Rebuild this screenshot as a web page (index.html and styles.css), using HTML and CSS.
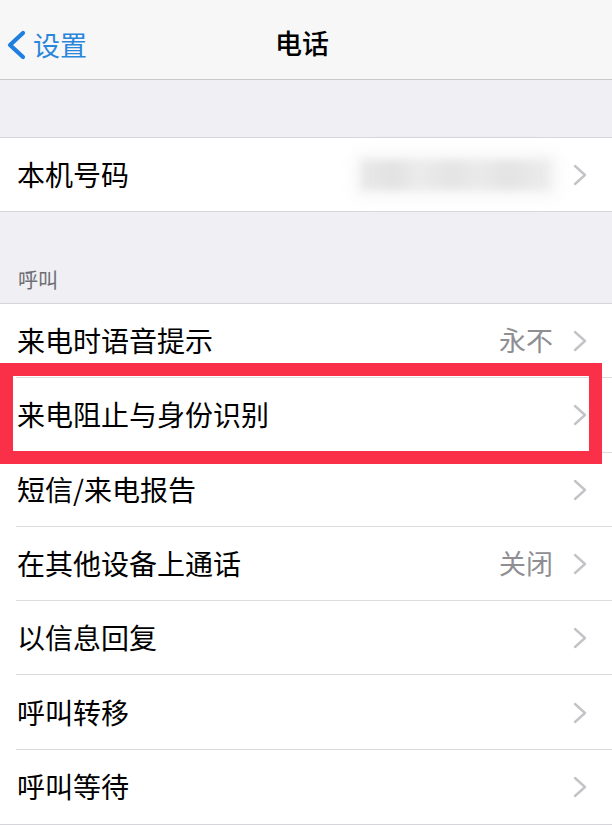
FILE: index.html
```html
<!DOCTYPE html>
<html lang="zh-CN">
<head>
<meta charset="utf-8">
<title>电话</title>
<link rel="stylesheet" href="styles.css">
</head>
<body>
<div class="nav">
  <div class="back">
    <svg class="back-icon" width="24" height="30" viewBox="0 0 24 30"><path d="M19 3 L6 15 L19 27" fill="none" stroke="#1f7fe0" stroke-width="4.2" stroke-linecap="round" stroke-linejoin="round"/></svg>
    <span class="back-text">设置</span>
  </div>
  <div class="title">电话</div>
</div>

<div class="gap-top"></div>

<div class="group">
  <div class="row row-single">
    <span class="label">本机号码</span>
    <span class="blurred"></span>
    <svg class="chev" width="14" height="22" viewBox="0 0 14 22"><path d="M2 2 L12 11 L2 20" fill="none" stroke="#c4c4c8" stroke-width="2.4" stroke-linecap="round" stroke-linejoin="round"/></svg>
  </div>
</div>

<div class="section-header"><span>呼叫</span></div>

<div class="group">
  <div class="row">
    <span class="label">来电时语音提示</span>
    <span class="value">永不</span>
    <svg class="chev" width="14" height="22" viewBox="0 0 14 22"><path d="M2 2 L12 11 L2 20" fill="none" stroke="#c4c4c8" stroke-width="2.4" stroke-linecap="round" stroke-linejoin="round"/></svg>
  </div>
  <div class="row highlighted">
    <span class="label">来电阻止与身份识别</span>
    <svg class="chev" width="14" height="22" viewBox="0 0 14 22"><path d="M2 2 L12 11 L2 20" fill="none" stroke="#c4c4c8" stroke-width="2.4" stroke-linecap="round" stroke-linejoin="round"/></svg>
    <div class="red-box"></div>
  </div>
  <div class="row">
    <span class="label">短信/来电报告</span>
    <svg class="chev" width="14" height="22" viewBox="0 0 14 22"><path d="M2 2 L12 11 L2 20" fill="none" stroke="#c4c4c8" stroke-width="2.4" stroke-linecap="round" stroke-linejoin="round"/></svg>
  </div>
  <div class="row">
    <span class="label">在其他设备上通话</span>
    <span class="value">关闭</span>
    <svg class="chev" width="14" height="22" viewBox="0 0 14 22"><path d="M2 2 L12 11 L2 20" fill="none" stroke="#c4c4c8" stroke-width="2.4" stroke-linecap="round" stroke-linejoin="round"/></svg>
  </div>
  <div class="row">
    <span class="label">以信息回复</span>
    <svg class="chev" width="14" height="22" viewBox="0 0 14 22"><path d="M2 2 L12 11 L2 20" fill="none" stroke="#c4c4c8" stroke-width="2.4" stroke-linecap="round" stroke-linejoin="round"/></svg>
  </div>
  <div class="row">
    <span class="label">呼叫转移</span>
    <svg class="chev" width="14" height="22" viewBox="0 0 14 22"><path d="M2 2 L12 11 L2 20" fill="none" stroke="#c4c4c8" stroke-width="2.4" stroke-linecap="round" stroke-linejoin="round"/></svg>
  </div>
  <div class="row row-last">
    <span class="label">呼叫等待</span>
    <svg class="chev" width="14" height="22" viewBox="0 0 14 22"><path d="M2 2 L12 11 L2 20" fill="none" stroke="#c4c4c8" stroke-width="2.4" stroke-linecap="round" stroke-linejoin="round"/></svg>
  </div>
</div>
</body>
</html>
```
FILE: styles.css
```css
* { box-sizing: border-box; }
html, body {
  margin: 0;
  padding: 0;
  background: #efeff4;
  font-family: "Noto Sans CJK SC", "Noto Sans", sans-serif;
  width: 612px;
  overflow: hidden;
}
.nav {
  position: relative;
  height: 80px;
  background: #f7f7f8;
  border-bottom: 1.5px solid #c9c9ce;
  display: flex;
  align-items: center;
  justify-content: center;
}
.back {
  position: absolute;
  left: 4px;
  top: 30px;
  display: flex;
  align-items: center;
  gap: 5px;
}
.back-icon { display: block; }
.back-text {
  color: #2a86db;
  font-size: 27px;
  line-height: 30px;
}
.title {
  font-size: 27px;
  font-weight: 500;
  color: #000;
  line-height: 30px;
  margin-top: 6px;
  margin-right: 8px;
}
.gap-top { height: 57px; }
.group {
  background: #fff;
  border-top: 1px solid #d6d6da;
  border-bottom: 1px solid #d6d6da;
}
.row {
  position: relative;
  height: 74.3px;
  display: flex;
  align-items: center;
  padding-left: 17px;
  padding-right: 25px;
}
.row-single { height: 73px; }
.row::after {
  content: "";
  position: absolute;
  left: 16px;
  right: 0;
  bottom: 0;
  height: 1px;
  background: #dcdce0;
}
.row-single::after, .row-last::after { display: none; }
.label {
  flex: 1;
  font-size: 28px;
  color: #000;
  line-height: 32px;
  margin-top: -2px;
}
.value {
  font-size: 27px;
  color: #8e8e93;
  margin-right: 20px;
  line-height: 32px;
  margin-top: -2px;
}
.chev { display: block; flex: none; }
.blurred {
  width: 190px;
  height: 30px;
  margin-right: 22px;
  background: linear-gradient(90deg, #e8e8e8 0%, #e2e2e2 18%, #ebebeb 30%, #e4e4e4 48%, #eaeaea 62%, #e3e3e3 78%, #ededed 100%);
  filter: blur(4px);
  box-shadow: 0 0 14px 8px #f7f7f7;
}
.section-header {
  height: 91px;
  display: flex;
  align-items: flex-end;
  padding-left: 18px;
  padding-bottom: 10px;
  font-size: 20px;
  color: #6d6d72;
  line-height: 26px;
}
.red-box {
  position: absolute;
  left: 0;
  right: 10px;
  top: -15px;
  bottom: -11px;
  border: 13px solid #fa2f48;
  pointer-events: none;
  z-index: 2;
}
```
